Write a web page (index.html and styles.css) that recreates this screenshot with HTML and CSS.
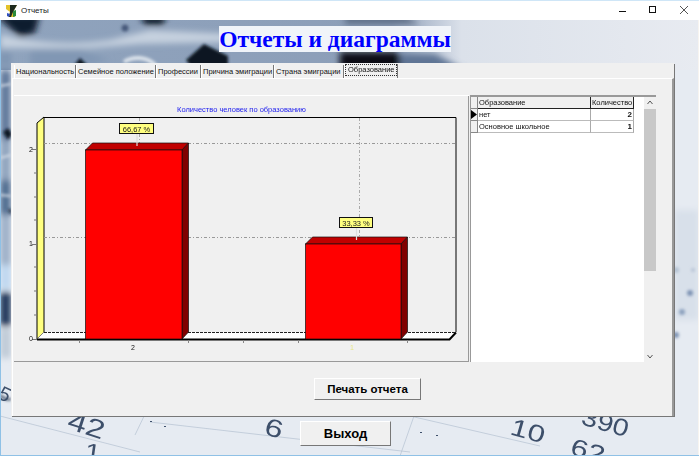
FILE: index.html
```html
<!DOCTYPE html>
<html lang="ru">
<head>
<meta charset="utf-8">
<title>Отчеты</title>
<link rel="stylesheet" href="styles.css">
</head>
<body>
<div class="window">
  <header class="titlebar">
    <svg class="app-icon" width="12" height="14" viewBox="0 0 12 14">
      <path d="M0 1h11L8 6l1 7H3l1-5-4-3z" fill="#e3c22a"/>
      <path d="M4 1h7L7 8 5 13H3l1-5z" fill="#1e2a1e"/>
      <path d="M7 7l3-1v6l-3 1z" fill="#2a8a3a"/>
      <path d="M1 9l3 1-1 3-2-1z" fill="#3050c0"/>
    </svg>
    <span class="title-text">Отчеты</span>
    <div class="win-controls">
      <svg width="12" height="12" viewBox="0 0 12 12"><path d="M0 6.500h7" stroke="#111" fill="none"/></svg>
      <svg width="12" height="12" viewBox="0 0 12 12"><rect x="0.500" y="1.500" width="6" height="6" stroke="#111" fill="none"/></svg>
      <svg width="12" height="12" viewBox="0 0 12 12"><path d="M1 1l8 8M9 1l-8 8" stroke="#555" fill="none"/></svg>
    </div>
  </header>
  <main class="client">
    <svg class="wallpaper" width="699" height="436" viewBox="0 0 699 436">
      <defs>
        <linearGradient id="right" x1="0" y1="0" x2="1" y2="0">
          <stop offset="0" stop-color="#8fa3bd"/>
          <stop offset="0.56" stop-color="#8c9eb8"/>
          <stop offset="0.66" stop-color="#dbe1ea"/>
          <stop offset="1" stop-color="#e8ebf1"/>
        </linearGradient>
        <filter id="soft"><feGaussianBlur stdDeviation="3"/></filter>
        <filter id="softer"><feGaussianBlur stdDeviation="1.500"/></filter>
        <filter id="tiny"><feGaussianBlur stdDeviation="0.400"/></filter>
      </defs>
      <rect width="699" height="436" fill="#e6ebf2"/>
      <rect width="699" height="50" fill="url(#right)"/>
      <g filter="url(#soft)">
        <path d="M-5 -5h45l-5 18-15 4z" fill="#0f1a2e"/>
        <path d="M0 14c30 8 70 12 110 6l40-10 80 4v8L140 24 90 28H0z" fill="#c6d1df"/>
        <path d="M30 30h50l30 10-40 8H30z" fill="#8197b4"/>
        <path d="M140 -4h26l-3 9h-18z" fill="#101a2c"/>
        <path d="M345 -4h60l15 8h-75z" fill="#5c6c84"/>
        <path d="M340 32h55l35 18H340z" fill="#0b0f18"/>
        <path d="M400 34h35l30 16h-65z" fill="#5f7494"/>
        <path d="M0 50h11v70H0z" fill="#5d7699"/>
        <path d="M0 32h11v14H0z" fill="#7f95b2"/>
        <path d="M0 120h11v40H0z" fill="#8da2bc"/>
        <path d="M0 160h11v35H0z" fill="#4e6a8e"/>
        <path d="M0 195h11v50H0z" fill="#9db0c8"/>
        <path d="M0 245h11v25H0z" fill="#c0d8f0"/>
        <path d="M0 272h11v34H0z" fill="#1d3458"/>
        <path d="M0 308h11v30H0z" fill="#c0cbd7"/>
        <path d="M674 190h25v110h-25z" fill="#d8e0ea"/>
      </g>
      <g filter="url(#softer)">
        <path d="M186 40l18-16 24 12v12h-36z" fill="#0c1322"/>
        <path d="M72 48l8-10 10 10z" fill="#0c1322"/>
        <circle cx="125" cy="8" r="3.500" fill="#47587a"/>
        <path d="M124 42c8-6 24-6 32 4" fill="none" stroke="#dde4ec" stroke-width="4"/>
        <path d="M3 112l5-4 4 6-4 6z" fill="#0c1322"/>
        <path d="M8 190l3-2v8z" fill="#16233a"/>
        <path d="M0 66l11-2M0 138l11-3M0 175l11 1" stroke="#d3dbe6" stroke-width="2" fill="none"/>
        <path d="M0 375c4 4 8 5 11 4" stroke="#2d3d57" stroke-width="2" fill="none"/>
        <circle cx="690" cy="273" r="3" fill="#7d93b4"/>
        <circle cx="682" cy="292" r="3" fill="#8ba0bd"/>
        <circle cx="676" cy="315" r="3" fill="#7d93b4"/>
        <circle cx="676" cy="250" r="3" fill="#b4c2d4"/>
        <circle cx="693" cy="250" r="2" fill="#b4c2d4"/>
      </g>
      <g fill="none" stroke="#b4c1d1" stroke-width="0.700" filter="url(#tiny)">
        <path d="M135 415l12-25"/>
        <path d="M400 436l14-40"/>
        <path d="M0 396l140 36M150 402l260 30"/>
        <path d="M410 396l130 30"/>
      </g>
      <path class="dots" d="M150 401.500h2M164 406.500h2M420 412.500h2M436 415.500h2" stroke="#3d4f6b" fill="none"/>
      <g class="scribble" filter="url(#tiny)">
        <text transform="translate(66 408) rotate(18) scale(1.300 1)" font-size="26">42</text>
        <text transform="translate(263 414) rotate(16) scale(1.300 1)" font-size="25">6</text>
        <text transform="translate(84 438) rotate(8) scale(1.300 1)" font-size="22">1</text>
        <text transform="translate(509 414) rotate(16) scale(1.300 1)" font-size="24">10</text>
        <text transform="translate(569 434) rotate(16) scale(1.300 1)" font-size="24">62</text>
        <text transform="translate(580 404) rotate(16) scale(1.200 1)" font-size="24">390</text>
        <text transform="translate(-3 378) rotate(25)" font-size="20">5</text>
      </g>
    </svg>

    <h1 class="heading">Отчеты и диаграммы</h1>

    <section class="tabs-panel">
      <nav class="tabs">
        <span class="tab w1">Национальность</span>
        <span class="tab w2">Семейное положение</span>
        <span class="tab w3">Профессии</span>
        <span class="tab w4">Причина эмиграции</span>
        <span class="tab w5">Страна эмиграции</span>
        <span class="tab active"><span class="focus">Образование</span></span>
      </nav>
      <div class="tab-page">
        <div class="report">
          <div class="chart">
            <svg width="455" height="267" viewBox="14 95 455 267">
              <text x="241.500" y="112" class="chart-title" text-anchor="middle">Количество человек по образованию</text>

              <path d="M37 339V123l7-6v215l-7 7z" fill="#ffff80" stroke="#000" stroke-width="1"/>
              <path d="M37 339l7-7h412l-7 7z" fill="#fff"/>
              <path d="M44 117.500h412v214.500" fill="none" stroke="#000"/>
              <path d="M37 339.500h412.500l6.500-7" fill="none" stroke="#000" stroke-width="2"/>
              <path d="M44 332.500h412" stroke="#222" stroke-dasharray="3 1" fill="none"/>
              <path d="M44 143.500h412M44 237.500h412" stroke="#999" stroke-dasharray="3 2 1 2" fill="none"/>
              <path d="M139.500 118v214M359.500 118v214" stroke="#aaa" stroke-dasharray="3 2 1 2" fill="none"/>

              <path d="M32 149.500h5M32 244.500h5M32 339.500h5M34 173h3M34 197h3M34 220h3M34 267h3M34 291h3M34 315h3" stroke="#777" fill="none"/>
              <text x="31" y="152" class="axis" text-anchor="middle">2</text>
              <text x="31" y="246" class="axis" text-anchor="middle">1</text>
              <text x="31" y="341" class="axis" text-anchor="middle">0</text>
              <path d="M79.500 340v3M188.500 340v3M243.500 340v3M298.500 340v3M407.500 340v3" stroke="#888" fill="none"/>
              <text x="133" y="350" class="axis" text-anchor="middle">2</text>
              <text x="352" y="350" class="axis faint" text-anchor="middle">1</text>

              <path d="M85.500 150l7-7h96l-6.500 7z" fill="#c00000" stroke="#111" stroke-width="0.700"/>
              <path d="M182 150l6.500-7v189l-6.500 7z" fill="#800000" stroke="#111" stroke-width="0.700"/>
              <rect x="85.500" y="150" width="96.500" height="189" fill="#f00" stroke="#111" stroke-width="0.700"/>

              <path d="M305.500 244l7-7h95l-6.500 7z" fill="#c00000" stroke="#111" stroke-width="0.700"/>
              <path d="M401 244l6.500-7v95l-6.500 7z" fill="#800000" stroke="#111" stroke-width="0.700"/>
              <rect x="305.500" y="244" width="95.500" height="95" fill="#f00" stroke="#111" stroke-width="0.700"/>

              <path d="M137 134v12M356.500 228v12" stroke="#ddd" stroke-width="1.200" fill="none"/>
              <rect x="119.500" y="123.500" width="34" height="10" fill="#ffff80" stroke="#111"/>
              <text x="136.500" y="131.500" class="callout" text-anchor="middle">66,67 %</text>
              <rect x="339.500" y="217.500" width="33" height="10" fill="#ffff80" stroke="#111"/>
              <text x="356" y="225.500" class="callout" text-anchor="middle">33,33 %</text>
            </svg>
          </div>
          <div class="grid">
            <div class="table">
              <div class="cell head ind"></div>
              <div class="cell head">Образование</div>
              <div class="cell head">Количество</div>
              <div class="cell ind"><svg width="6" height="9" viewBox="0 0 6 9"><path d="M0 0l6 4.500-6 4.500z" fill="#000"/></svg></div>
              <div class="cell">нет</div>
              <div class="cell num">2</div>
              <div class="cell ind"></div>
              <div class="cell">Основное школьное</div>
              <div class="cell num">1</div>
            </div>
            <div class="scrollbar">
              <svg width="12" height="12" viewBox="0 0 12 12"><path d="M3.500 7l2.500-3 2.500 3" fill="none" stroke="#555"/></svg>
              <div class="track"><div class="thumb"></div></div>
              <svg width="12" height="10" viewBox="0 0 12 10"><path d="M3.500 3l2.500 3 2.500-3" fill="none" stroke="#555"/></svg>
            </div>
          </div>
        </div>
        <div class="print-row"><button class="btn print">Печать отчета</button></div>
      </div>
    </section>
    <div class="exit-row"><button class="btn exit">Выход</button></div>
  </main>
  <div class="frame-bottom"></div>
</div>
</body>
</html>
```
FILE: styles.css
```css
html, body { margin: 0; padding: 0; }
body { width: 699px; height: 456px; overflow: hidden; font-family: "Liberation Sans", Arial, sans-serif; background: #fff; }
.window { width: 699px; height: 456px; display: flex; flex-direction: column; filter: blur(0.35px); }
.titlebar { height: 20px; flex: none; box-sizing: border-box; border-top: 1px solid #cfe6f7; background: #fff; display: flex; align-items: center; padding-left: 6px; gap: 3px; }
.title-text { font-size: 8px; color: #222; }
.win-controls { margin-left: auto; display: flex; gap: 18px; padding-right: 8px; }
.client { position: relative; flex: 1; min-height: 0; display: flex; flex-direction: column; overflow: hidden; }
.client::after { content: ""; position: absolute; inset: 0; border-left: 1px solid #8fc1e6; border-right: 1px solid #f7f4f0; pointer-events: none; }
.wallpaper { position: absolute; left: 0; top: 0; }
.scribble text { font-family: "Liberation Sans", Arial, sans-serif; fill: #3d4f6b; }
.heading { position: relative; align-self: flex-start; margin: 6px 0 0 219px; height: 26px; width: 232px; box-sizing: border-box; white-space: nowrap; background: #f0f4f9; color: #0000ff; font: bold 23.500px/26px "Liberation Serif", "Times New Roman", serif; text-align: center; }
.tabs-panel { position: relative; margin: 11px 0 0 11px; width: 663px; height: 353px; background: #f0f0f0; box-shadow: 1px 1px 0 #777; display: flex; flex-direction: column; }
.tabs { height: 14px; margin-top: 1px; padding-left: 3px; display: flex; align-items: flex-end; flex: none; }
.tab { height: 13px; box-sizing: border-box; border-right: 1px solid #777; border-left: 1px solid #fff; font-size: 7.500px; line-height: 13px; color: #111; padding-left: 1px; white-space: nowrap; overflow: hidden; background: #f0f0f0; }
.w1 { width: 62px; }
.w2 { width: 80px; }
.w3 { width: 45px; }
.w4 { width: 73px; }
.w5 { width: 70px; }
.tab.active { width: 54px; height: 14px; padding: 1px 1px 0; margin-left: 0; }
.focus { display: block; height: 10px; line-height: 10px; outline: 1px dotted #333; outline-offset: 0; padding-left: 2px; }
.tab-page { flex: 1; margin-left: 1px; border-top: 1px solid #fff; border-left: 1px solid #fff; border-right: 2px solid #999; background: #f0f0f0; display: flex; flex-direction: column; padding: 16px 0 0 1px; box-sizing: border-box; min-height: 0; }
.report { display: flex; gap: 1px; height: 267px; flex: none; }
.chart { width: 455px; height: 267px; box-sizing: border-box; background: #f0f0f0; box-shadow: inset 0 1px 0 #fff, inset -1px -1px 0 #999; flex: none; }
.chart svg { display: block; }
.chart-title { font-size: 7.500px; fill: #2222ee; font-family: "Liberation Sans", Arial, sans-serif; }
.axis { font-size: 7px; fill: #111; font-family: "Liberation Sans", Arial, sans-serif; }
.axis.faint { fill: #e6e68a; }
.callout { font-size: 7.500px; fill: #222; font-family: "Liberation Sans", Arial, sans-serif; }
.grid { width: 186px; height: 267px; background: #fff; display: flex; box-shadow: inset 0 2px 0 #999, inset 1px 0 0 #999; padding: 2px 0 0 1px; box-sizing: border-box; flex: none; }
.table { width: 163px; margin-right: 10px; display: grid; grid-template-columns: 7px 113px 43px; grid-template-rows: 12px 12px 12px; align-content: start; flex: none; }
.cell { box-sizing: border-box; height: 12px; border-right: 1px solid #aaa; border-bottom: 1px solid #bbb; font-size: 7.500px; line-height: 11px; color: #111; padding-left: 1px; white-space: nowrap; overflow: hidden; }
.head { background: #f0f0f0; border-right: 1px solid #222; border-bottom: 1px solid #222; }
.ind { background: #f0f0f0; border-right: 1px solid #888; border-bottom: 1px solid #888; padding: 1px 0 0; }
.ind svg { display: block; }
.num { text-align: right; padding-right: 1px; font-weight: bold; font-size: 8px; }
.scrollbar { width: 12px; background: #f0f0f0; display: flex; flex-direction: column; flex: none; }
.scrollbar svg { display: block; flex: none; }
.track { flex: 1; }
.thumb { height: 162px; background: #c8c8c8; }
.print-row { padding: 16px 0 0 300px; }
.btn { display: block; box-sizing: border-box; margin: 0; padding: 0; background: #f0f0f0; border: 1px solid #fff; border-right-color: #777; border-bottom-color: #777; font-family: "Liberation Sans", Arial, sans-serif; font-weight: bold; color: #000; }
.print { width: 107px; height: 22px; font-size: 11.500px; }
.exit-row { position: relative; padding: 5px 0 0 300px; }
.exit { width: 91px; height: 25px; font-size: 13px; }
.frame-bottom { height: 1px; flex: none; background: #8fc1e6; }
```
